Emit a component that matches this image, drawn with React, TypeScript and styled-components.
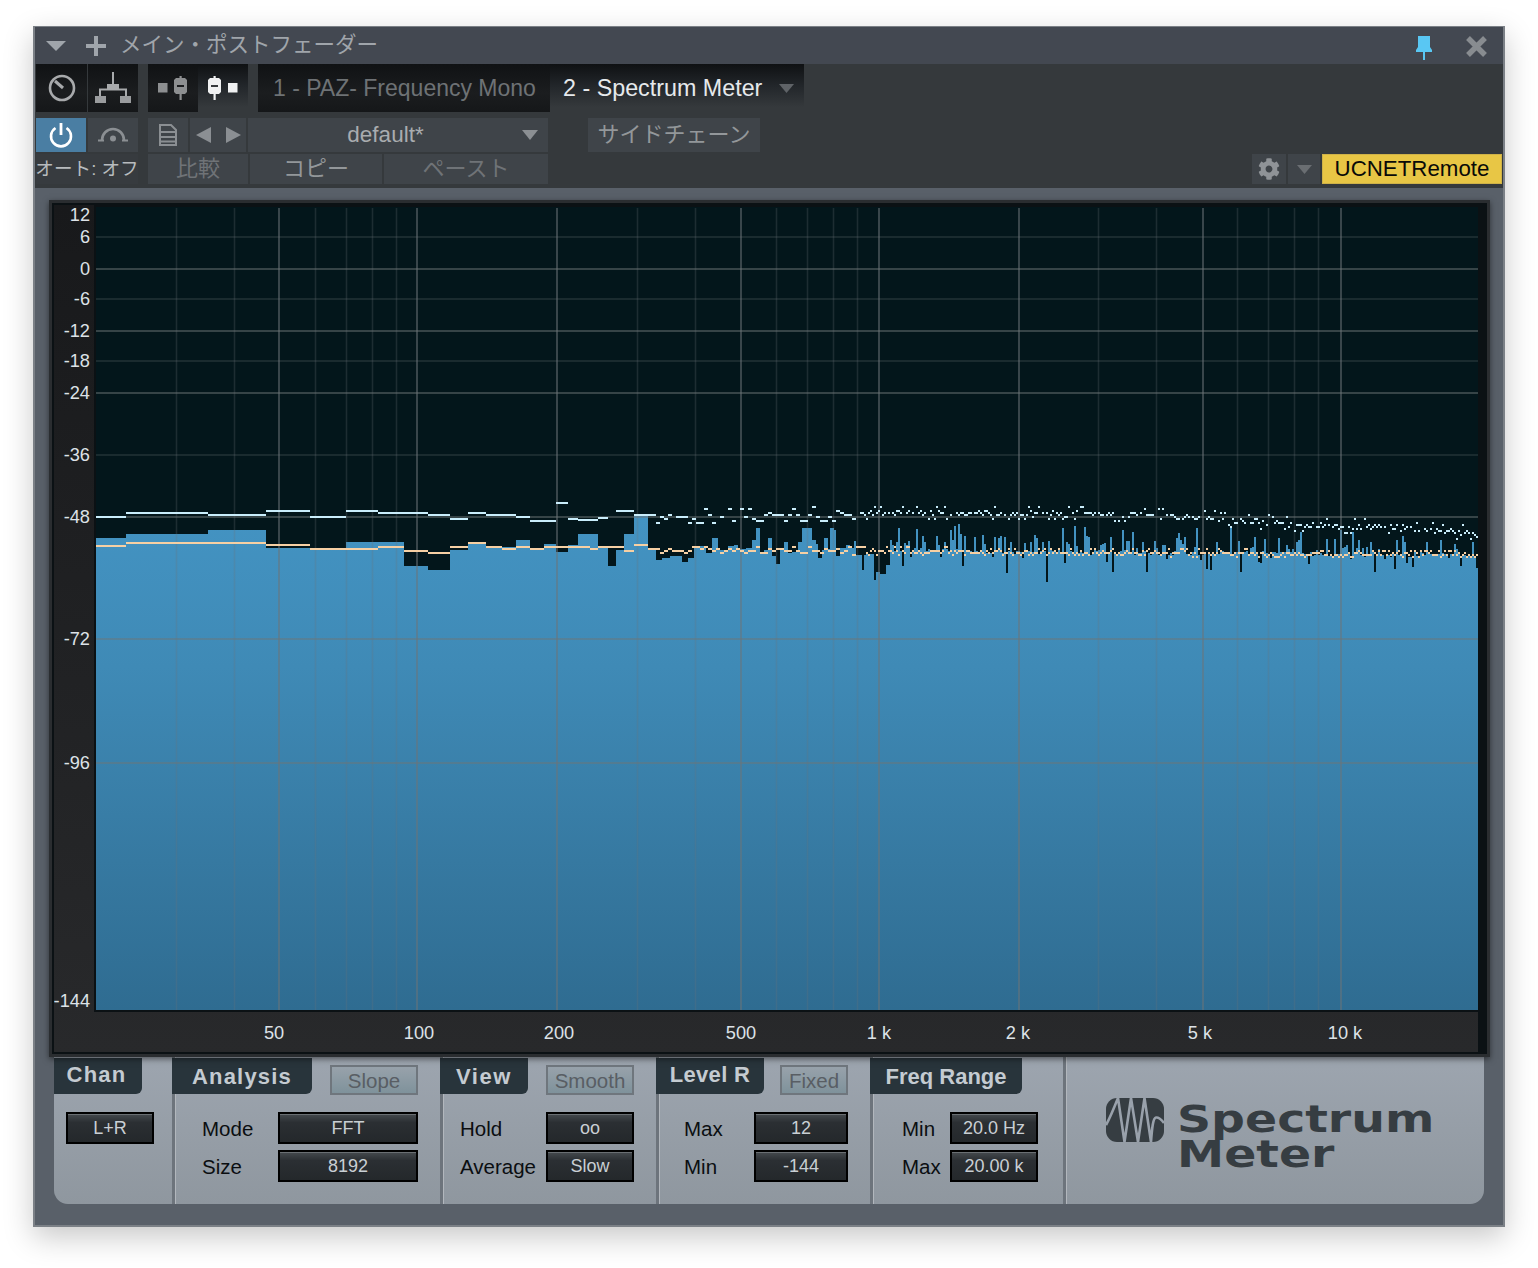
import React from 'react';
import styled, { createGlobalStyle } from 'styled-components';
import { FaCog } from 'react-icons/fa';

const FONT = '"Liberation Sans", "Noto Sans CJK JP", sans-serif';

const GlobalStyle = createGlobalStyle`
  html, body {
    margin: 0;
    background: #fff;
    font-family: ${FONT};
  }
`;

const Page = styled.div`
  width: 1538px;
  height: 1268px;
  padding: 26px 0 0 33px;
  box-sizing: border-box;
  overflow: hidden;
`;

const Window = styled.div`
  width: 1472px;
  height: 1201px;
  box-sizing: border-box;
  border: 2px solid #7b8086;
  border-width: 1px 2px 2px 2px;
  background: #596069;
  box-shadow: 0 10px 28px rgba(0, 0, 0, 0.22);
  display: flex;
  flex-direction: column;
`;

const TitleBar = styled.div`
  height: 37px;
  flex: none;
  background: #434851;
  display: flex;
  align-items: center;
  padding-left: 11px;
`;

const TitleText = styled.span`
  margin-left: 14px;
  padding-bottom: 6px;
  font-size: 21.5px;
  color: #a0a5ab;
  white-space: nowrap;
`;

const TitleActions = styled.div`
  margin-left: auto;
  margin-right: 16px;
  padding-top: 2px;
  display: flex;
  align-items: center;
  gap: 34px;
`;

const Toolbar = styled.div`
  height: 124px;
  flex: none;
  box-sizing: border-box;
  background: #35393c;
  padding: 0 1px;
  display: flex;
  flex-direction: column;
`;

const ToolRow = styled.div<{ $h: number; $top?: number }>`
  height: ${p => p.$h}px;
  margin-top: ${p => p.$top ?? 0}px;
  flex: none;
  display: flex;
  align-items: stretch;
`;

const Spacer = styled.div<{ $w: number }>`
  width: ${p => p.$w}px;
  flex: none;
`;

const Cell = styled.div<{ $w: number; $gap?: number; $jp?: boolean }>`
  width: ${p => p.$w}px;
  margin-right: ${p => p.$gap ?? 0}px;
  padding-bottom: ${p => (p.$jp ? 6 : 0)}px;
  box-sizing: border-box;
  flex: none;
  display: flex;
  align-items: center;
  justify-content: center;
  white-space: nowrap;
`;

const BlackCell = styled(Cell)`
  background: linear-gradient(#101214, #1b1d1f 60%, #151719);
`;

const OpenCell = styled(Cell)`
  background: linear-gradient(#0f1113, #22262a 45%, #35393c 90%);
`;

const TabInactive = styled(BlackCell)`
  justify-content: flex-start;
  padding-left: 15px;
  font-size: 23px;
  color: #6e7275;
`;

const TabActive = styled(OpenCell)`
  justify-content: flex-start;
  padding-left: 13px;
  font-size: 23.3px;
  color: #e6e9ec;
`;

const TabArrow = styled.div`
  margin-left: 17px;
  display: flex;
`;

const FlatButton = styled(Cell)<{ $dim?: boolean }>`
  background: #3f4449;
  font-size: 22px;
  color: ${p => (p.$dim ? '#6f7377' : '#93979a')};
`;

const PowerButton = styled(Cell)`
  background: #4a7ea3;
`;

const PresetBox = styled(FlatButton)`
  color: #a9acaf;
  padding-left: 25px;
  position: relative;
`;

const PresetName = styled.span`
  margin-right: 50px;
  font-size: 22.5px;
`;

const PresetArrow = styled.div`
  position: absolute;
  right: 10px;
  top: 12px;
  display: flex;
`;

const AutoLabel = styled(Cell)`
  font-size: 18.6px;
  color: #b8bbbe;
  background: #373b3f;
`;

const RightTools = styled.div`
  margin-left: auto;
  display: flex;
  gap: 2px;
`;

const RemoteButton = styled(Cell)`
  background: #e8c645;
  border: 1px solid #cfb248;
  color: #0a0a08;
  font-size: 22.3px;
`;

const GearIcon = styled(FaCog)`
  font-size: 22px;
  color: #8f9397;
`;

const Body = styled.div`
  flex: 1;
  padding: 12px 0 0 14px;
  display: flex;
  flex-direction: column;
  align-items: flex-start;
`;

const ScopeFrame = styled.div`
  width: 1441px;
  height: 857px;
  flex: none;
  box-sizing: border-box;
  border: 3px solid #2a2d30;
  background: #0b1114;
  padding: 2px;
  position: relative;
  z-index: 1;
  box-shadow: 0 2px 6px rgba(0, 0, 0, 0.5);
`;

const ScopeSvg = styled.svg`
  display: block;
`;

const AxisText = styled.text`
  font-family: ${FONT};
  font-size: 18.2px;
  fill: #dde2e7;
`;

const Panel = styled.div`
  width: 1430px;
  height: 147px;
  margin-left: 5px;
  flex: none;
  background: linear-gradient(#9da5af, #8f979f);
  border-radius: 0 0 14px 14px;
  display: flex;
`;

const Section = styled.div<{ $w: number; $first?: boolean }>`
  width: ${p => p.$w}px;
  flex: none;
  box-sizing: border-box;
  border-left: ${p => (p.$first ? 'none' : '3px solid #6d747c')};
  box-shadow: ${p => (p.$first ? 'none' : 'inset 1px 0 0 #b2b7bd')};
  display: flex;
  flex-direction: column;
`;

const Head = styled.div`
  height: 37px;
  padding-top: 1px;
  box-sizing: border-box;
  flex: none;
  display: flex;
  align-items: flex-start;
`;

const HeadTab = styled.div<{ $w: number; $first?: boolean; $raised?: boolean; $track?: number; $shift?: number }>`
  width: ${p => p.$w}px;
  height: 36px;
  margin-left: ${p => (p.$first ? 0 : -3)}px;
  box-sizing: border-box;
  padding-top: 2px;
  padding-bottom: ${p => (p.$raised ? 4 : 0)}px;
  padding-right: ${p => p.$shift ?? 0}px;
  background: #28343b;
  border-radius: 0 0 6px 0;
  display: flex;
  align-items: center;
  justify-content: center;
  font-size: 22px;
  font-weight: bold;
  letter-spacing: ${p => p.$track ?? 1}px;
  color: #c4cbd1;
  white-space: nowrap;
`;

const Toggle = styled.div<{ $w: number; $left: number }>`
  width: ${p => p.$w}px;
  height: 30px;
  margin: 7px 0 0 ${p => p.$left}px;
  padding-top: 2px;
  box-sizing: border-box;
  border: 2px solid #6f767d;
  background: linear-gradient(#98a2ab, #7f929b);
  display: flex;
  align-items: center;
  justify-content: center;
  font-size: 20.5px;
  color: #595e64;
`;

const Rows = styled.div<{ $pad: number }>`
  padding: 18px 0 0 ${p => p.$pad}px;
  display: flex;
  flex-direction: column;
  gap: 6px;
`;

const Row = styled.div`
  height: 32px;
  display: flex;
  align-items: center;
`;

const RowLabel = styled.div<{ $w: number }>`
  width: ${p => p.$w}px;
  flex: none;
  font-size: 20.5px;
  padding-top: 1px;
  color: #0b0e11;
  white-space: nowrap;
`;

const Selector = styled.div<{ $w: number }>`
  width: ${p => p.$w}px;
  height: 32px;
  flex: none;
  box-sizing: border-box;
  border: 2px solid #000;
  background: linear-gradient(#454a4e, #2b2f33 30%, #24282b);
  box-shadow: inset 0 1px 0 #6a6f73;
  display: flex;
  align-items: center;
  justify-content: center;
  font-size: 18px;
  color: #c9cfd4;
`;

const Brand = styled.div`
  flex: 1;
  box-sizing: border-box;
  padding: 41px 0 0 40px;
  display: flex;
  align-items: flex-start;
  gap: 13px;
`;

const Wordmark = styled.div`
  margin-top: 4px;
  font-family: "DejaVu Sans", sans-serif;
  font-weight: bold;
  font-size: 37px;
  line-height: 35px;
  color: #363d42;
  transform: scaleX(1.28);
  transform-origin: left top;
  white-space: nowrap;
`;

const PlusSvg = styled.svg`
  margin-left: 20px;
`;

const PinSvg = styled.svg`
  margin-top: 3px;
`;

const Triangle = ({ w, h, color }: { w: number; h: number; color: string }) => (
  <svg width={w} height={h} viewBox="0 0 20 10" preserveAspectRatio="none">
    <path d="M0 0h20L10 10z" fill={color} />
  </svg>
);

const Arrow = ({ dir }: { dir: 'left' | 'right' }) => (
  <svg width="15" height="16" viewBox="0 0 15 16">
    <path d={dir === 'left' ? 'M15 0v16L0 8z' : 'M0 0v16l15-8z'} fill="#8b8f93" />
  </svg>
);

const PlusIcon = () => (
  <PlusSvg width="20" height="20" viewBox="0 0 20 20">
    <path d="M8 0h4v8h8v4h-8v8H8v-8H0V8h8z" fill="#a0a5ab" />
  </PlusSvg>
);

const PinIcon = () => (
  <PinSvg width="16" height="24" viewBox="0 0 16 24">
    <path d="M2 0h12v11l2 3v2H0v-2l2-3z" fill="#59c7f3" />
    <rect x="7" y="16" width="2" height="8" fill="#59c7f3" />
  </PinSvg>
);

const CloseIcon = () => (
  <svg width="21" height="21" viewBox="0 0 21 21">
    <path d="M2 2l17 17M19 2L2 19" stroke="#888c90" strokeWidth="5.4" />
  </svg>
);

const KnobIcon = () => (
  <svg width="28" height="28" viewBox="0 0 28 28">
    <circle cx="14" cy="14" r="12" fill="none" stroke="#a8aaac" strokeWidth="2.6" />
    <path d="M7 7l8 7" stroke="#a8aaac" strokeWidth="3" />
  </svg>
);

const RoutingIcon = () => (
  <svg width="38" height="32" viewBox="0 0 38 32">
    <path d="M19 0v13M6 24v-6.500h26V24" fill="none" stroke="#a8aaac" strokeWidth="2" />
    <rect x="13" y="12" width="12" height="6" fill="#a8aaac" />
    <rect x="1" y="24" width="11" height="7" fill="#9a9c9e" />
    <rect x="26" y="24" width="11" height="7" fill="#9a9c9e" />
  </svg>
);

const FaderIcon = ({ color, flip }: { color: string; flip?: boolean }) => {
  const fx = flip ? 0 : 16;
  return (
    <svg width="30" height="24" viewBox="0 0 30 24">
      <rect x={flip ? 20 : 0} y="7" width="9.500" height="9.500" fill={color} />
      <rect x={fx + 5.5} y="0" width="2.200" height="24" fill={color} />
      <path d={`M${fx + 2} 2h9l2 2v12l-2 2h-9l-2-2V4z`} fill={color} />
      <rect x={fx + 3} y="9" width="7" height="2" fill={flip ? '#35393c' : '#1a1c1e'} />
    </svg>
  );
};

const PowerIcon = () => (
  <svg width="24" height="26" viewBox="0 0 24 26">
    <path d="M6.5 6a10 10 0 1 0 11 0" fill="none" stroke="#fff" strokeWidth="2.6" />
    <path d="M12 1v12" stroke="#fff" strokeWidth="2.8" />
  </svg>
);

const BypassIcon = () => (
  <svg width="30" height="16" viewBox="0 0 30 16">
    <path d="M4 13a11 11 0 0 1 22 0" fill="none" stroke="#8b8f93" strokeWidth="2.6" />
    <path d="M0 13.600h6M24 13.600h6" stroke="#8b8f93" strokeWidth="2" />
    <circle cx="15" cy="11.500" r="3" fill="#8b8f93" />
  </svg>
);

const DocIcon = () => (
  <svg width="18" height="22" viewBox="0 0 18 22">
    <path
      d="M1 1h11l5 5v15H1zM2 8h15M2 13h15M2 17.500h15"
      fill="none"
      stroke="#8b8f93"
      strokeWidth="2"
    />
  </svg>
);

const BrandIcon = () => (
  <svg width="58" height="44" viewBox="0 0 58 44">
    <rect width="58" height="44" rx="11" fill="#363d42" />
    <path
      d="M0 27C4 20 8 10 12 0L18.500 44 25 0 32 44 38.500 0 45 44C46 30 47 20 50 19.500 53 19 55 21 58 25"
      fill="none"
      stroke="#99a1ab"
      strokeWidth="2.6"
    />
  </svg>
);

// spectrum data, in page pixels
const PLOT_L = 96;
const PLOT_R = 1478;
const PLOT_T = 206;
const PLOT_B = 1010;

type Seg = [number, number, number];

const BARS: Seg[] = [
  [96, 126, 538], [126, 208, 534], [208, 266, 530], [266, 310, 548], [310, 346, 550],
  [346, 404, 542], [404, 428, 566], [428, 450, 570], [450, 468, 550], [468, 486, 544],
  [486, 516, 547], [516, 530, 540], [530, 544, 549], [544, 556, 544], [556, 568, 552],
  [568, 578, 545], [578, 598, 534], [598, 608, 547], [608, 616, 566], [616, 624, 550],
  [624, 634, 534], [634, 648, 516], [648, 656, 550],
];

const ORANGE: Seg[] = [
  [96, 126, 545], [126, 208, 542], [208, 266, 542], [266, 310, 544], [310, 346, 548],
  [346, 378, 548], [378, 404, 546], [404, 428, 550], [428, 450, 552], [450, 468, 546],
  [468, 486, 542], [486, 502, 546], [502, 516, 548], [516, 530, 546], [530, 544, 548],
  [544, 556, 546], [556, 590, 546], [590, 598, 548], [598, 624, 546], [624, 634, 550],
  [634, 648, 544], [648, 656, 548],
];

const WHITE: Seg[] = [
  [96, 126, 516], [126, 208, 512], [208, 266, 514], [266, 310, 510], [310, 346, 516],
  [346, 378, 510], [378, 428, 512], [428, 450, 514], [450, 468, 518], [468, 486, 512],
  [486, 516, 514], [516, 530, 516], [530, 556, 520], [556, 568, 502], [568, 578, 518],
  [578, 598, 519], [598, 608, 517], [616, 634, 510], [634, 648, 514], [648, 656, 514],
];

// measured steps between 656 and 890: [right edge, top]
const MID: [number, number][] = [
  [662, 560], [670, 558], [682, 556], [688, 562], [694, 558], [706, 546], [712, 553], [718, 538],
  [728, 550], [734, 546], [738, 545], [746, 549], [752, 548], [756, 540], [760, 528], [764, 553],
  [768, 550], [772, 538], [776, 556], [780, 564], [784, 548], [788, 542], [792, 553], [798, 552],
  [802, 542], [812, 528], [816, 540], [818, 544], [822, 558], [824, 550], [828, 538], [830, 549],
  [834, 528], [836, 530], [840, 556], [846, 548], [850, 545], [854, 548], [856, 541], [858, 555],
  [862, 555], [864, 570], [866, 555], [874, 554], [876, 580], [880, 572], [886, 574], [890, 565],
];

const SPIKES: Record<number, number> = {
  898: 528, 916: 529, 950: 530, 954: 526, 958: 524, 1007: 573, 1047: 582, 1063: 528,
  1075: 526, 1085: 527, 1112: 572, 1123: 530, 1146: 572, 1133: 532, 1178: 533, 1197: 528,
  1210: 570, 1241: 572, 1230: 528, 1300: 532, 1352: 532, 1340: 530, 1402: 536, 1440: 540,
};

const lerp = (pts: [number, number][], x: number) => {
  for (let i = 1; i < pts.length; i++) {
    if (x <= pts[i][0]) {
      const [x0, y0] = pts[i - 1];
      const [x1, y1] = pts[i];
      return y0 + ((y1 - y0) * (x - x0)) / (x1 - x0);
    }
  }
  return pts[pts.length - 1][1];
};

const WHITE_TREND: [number, number][] = [
  [656, 516], [800, 514], [870, 512], [1100, 513], [1200, 517], [1300, 524], [1400, 527], [1478, 533],
];

const buildSpectrum = () => {
  let seed = 4711;
  const rnd = () => {
    seed = (seed * 1664525 + 1013904223) >>> 0;
    return seed / 4294967296;
  };
  const bars = [...BARS];
  const orange = [...ORANGE];
  const white = [...WHITE];

  let from = 656;
  MID.forEach(([to, top]) => {
    bars.push([from, to, top]);
    from = to;
  });

  for (let x = 890; x < PLOT_R; x += 2) {
    const base = 550 + ((x - 890) / 588) * 6;
    const r = rnd();
    let top = base + (rnd() - 0.5) * 5;
    if (r < 0.24) top = base - 4 - rnd() * 13;
    else if (r < 0.36) top = base + 3 + rnd() * 14;
    bars.push([x, x + 2, Math.round(SPIKES[x] ?? SPIKES[x + 1] ?? top)]);
  }

  for (let x = 656; x < PLOT_R; x += x < 860 ? 4 : 2) {
    const w = x < 860 ? 4 : 2;
    const drift = 549 + ((x - 656) / 822) * 5;
    const o = rnd();
    const oy = drift + (o < 0.18 ? -4 : o < 0.36 ? 3 : (rnd() - 0.5) * 3);
    orange.push([x, x + w, Math.round(oy / 2) * 2]);

    const t = rnd();
    if (t > (x < 860 ? 0.06 : 0.16)) {
      const wy = lerp(WHITE_TREND, x) + (t > 0.9 ? -7 : t < 0.26 ? 6 : (rnd() - 0.5) * 5);
      white.push([x, x + w, Math.round(wy / 2) * 2]);
    }
  }

  const toPath = (segs: Seg[], h: number) =>
    segs.map(([a, b, y]) => `M${a} ${y}H${b}V${y + h}H${a}Z`).join('');

  return {
    bars: bars.map(([a, b, y]) => `M${a} ${y}H${b}V${PLOT_B}H${a}Z`).join(''),
    orange: toPath(orange, 2),
    white: toPath(white, 2),
  };
};

const SPECTRUM = buildSpectrum();

const freqX = (f: number) => Math.round(417 + 461 * Math.log10(f / 100)) + 0.5;

const MINOR_FREQS = [30, 40, 60, 70, 80, 90, 300, 400, 600, 700, 800, 900, 3000, 4000, 6000, 7000, 8000, 9000];
const MAJOR_X = [279, 417, 557, 741, 879, 1019, 1203, 1341];

const GRID = '#6d7478';

const DB_LINES: { y: number; label: string; major?: boolean }[] = [
  { y: 237, label: '6' },
  { y: 269, label: '0', major: true },
  { y: 299, label: '-6' },
  { y: 331, label: '-12', major: true },
  { y: 361, label: '-18' },
  { y: 393, label: '-24', major: true },
  { y: 455, label: '-36' },
  { y: 517, label: '-48', major: true },
  { y: 639, label: '-72', major: true },
  { y: 763, label: '-96', major: true },
];

const FREQ_LABELS: [number, string][] = [
  [274, '50'], [419, '100'], [559, '200'], [741, '500'], [879, '1 k'], [1018, '2 k'], [1200, '5 k'], [1345, '10 k'],
];

const Scope = () => (
  <ScopeSvg width="1431" height="847" viewBox="54 205 1431 847">
    <defs>
      <linearGradient id="bar" gradientUnits="userSpaceOnUse" x1="0" y1="520" x2="0" y2="1010">
        <stop offset="0" stopColor="#4393c2" />
        <stop offset="0.3" stopColor="#3f8ab6" />
        <stop offset="1" stopColor="#2f6c91" />
      </linearGradient>
      <linearGradient id="axis" x1="0" y1="0" x2="0" y2="1">
        <stop offset="0" stopColor="#18191b" />
        <stop offset="1" stopColor="#28292b" />
      </linearGradient>
    </defs>
    <rect x="54" y="205" width="1424" height="847" fill="url(#axis)" />
    <rect x={PLOT_L - 2} y="205" width={PLOT_R - PLOT_L + 2} height={PLOT_B - 205 + 2} fill="#0b1114" />
    <rect x={PLOT_L} y={PLOT_T + 1} width={PLOT_R - PLOT_L} height={PLOT_B - PLOT_T - 1} fill="#03161b" />

    <path d={SPECTRUM.bars} fill="url(#bar)" shapeRendering="crispEdges" />

    {MINOR_FREQS.map(f => (
      <line key={f} x1={freqX(f)} x2={freqX(f)} y1={208} y2={PLOT_B} stroke={GRID} strokeOpacity="0.25" strokeWidth="1.6" />
    ))}
    {MAJOR_X.map(x => (
      <line key={x} x1={x} x2={x} y1={208} y2={PLOT_B} stroke={GRID} strokeOpacity="0.65" strokeWidth="1.6" />
    ))}
    {DB_LINES.map(l => (
      <line
        key={l.y}
        x1={PLOT_L}
        x2={PLOT_R}
        y1={l.y}
        y2={l.y}
        stroke={GRID}
        strokeOpacity={l.major ? 0.65 : 0.3}
        strokeWidth="1.6"
      />
    ))}

    <path d={SPECTRUM.white} fill="#c9edfb" shapeRendering="crispEdges" />
    <path d={SPECTRUM.orange} fill="#f6d0a4" shapeRendering="crispEdges" />

    <AxisText x="90" y="221" textAnchor="end">12</AxisText>
    {DB_LINES.map(l => (
      <AxisText key={l.label} x="90" y={l.y + 6} textAnchor="end">{l.label}</AxisText>
    ))}
    <AxisText x="90" y="1007" textAnchor="end">-144</AxisText>
    {FREQ_LABELS.map(([x, label]) => (
      <AxisText key={label} x={x} y="1039" textAnchor="middle">{label}</AxisText>
    ))}
  </ScopeSvg>
);

export default function App() {
  return (
    <Page>
      <GlobalStyle />
      <Window>
        <TitleBar>
          <Triangle w={20} h={10} color="#a0a5ab" />
          <PlusIcon />
          <TitleText>メイン・ポストフェーダー</TitleText>
          <TitleActions>
            <PinIcon />
            <CloseIcon />
          </TitleActions>
        </TitleBar>

        <Toolbar>
          <ToolRow $h={48}>
            <BlackCell $w={51} $gap={1}><KnobIcon /></BlackCell>
            <BlackCell $w={50}><RoutingIcon /></BlackCell>
            <Spacer $w={10} />
            <BlackCell $w={50}><FaderIcon color="#8d8f91" /></BlackCell>
            <OpenCell $w={50}><FaderIcon color="#f0f1f2" flip /></OpenCell>
            <Spacer $w={10} />
            <TabInactive $w={292}>1 - PAZ- Frequency Mono</TabInactive>
            <TabActive $w={254}>
              2 - Spectrum Meter
              <TabArrow><Triangle w={15} h={9} color="#5f6367" /></TabArrow>
            </TabActive>
          </ToolRow>

          <ToolRow $h={34} $top={6}>
            <PowerButton $w={50} $gap={2}><PowerIcon /></PowerButton>
            <FlatButton $w={50}><BypassIcon /></FlatButton>
            <Spacer $w={10} />
            <FlatButton $w={40} $gap={2}><DocIcon /></FlatButton>
            <FlatButton $w={56} $gap={2}>
              <Arrow dir="left" />
              <Spacer $w={15} />
              <Arrow dir="right" />
            </FlatButton>
            <PresetBox $w={300}>
              <PresetName>default*</PresetName>
              <PresetArrow><Triangle w={16} h={10} color="#8b8f93" /></PresetArrow>
            </PresetBox>
            <Spacer $w={40} />
            <FlatButton $w={172} $jp>サイドチェーン</FlatButton>
          </ToolRow>

          <ToolRow $h={30} $top={2}>
            <AutoLabel $w={102} $jp>オート: オフ</AutoLabel>
            <Spacer $w={10} />
            <FlatButton $w={100} $gap={2} $dim $jp>比較</FlatButton>
            <FlatButton $w={132} $gap={2} $jp>コピー</FlatButton>
            <FlatButton $w={164} $dim $jp>ペースト</FlatButton>
            <RightTools>
              <FlatButton $w={34}><GearIcon /></FlatButton>
              <FlatButton $w={32}><Triangle w={15} h={9} color="#6a6e72" /></FlatButton>
              <RemoteButton $w={180}>UCNETRemote</RemoteButton>
            </RightTools>
          </ToolRow>
        </Toolbar>

        <Body>
          <ScopeFrame>
            <Scope />
          </ScopeFrame>
          <Panel>
            <Section $w={118} $first>
              <Head><HeadTab $w={88} $first $raised $track={1.2} $shift={3}>Chan</HeadTab></Head>
              <Rows $pad={12}>
                <Row><Selector $w={88}>L+R</Selector></Row>
              </Rows>
            </Section>

            <Section $w={268}>
              <Head>
                <HeadTab $w={140} $track={1.2}>Analysis</HeadTab>
                <Toggle $w={88} $left={18}>Slope</Toggle>
              </Head>
              <Rows $pad={27}>
                <Row><RowLabel $w={76}>Mode</RowLabel><Selector $w={140}>FFT</Selector></Row>
                <Row><RowLabel $w={76}>Size</RowLabel><Selector $w={140}>8192</Selector></Row>
              </Rows>
            </Section>

            <Section $w={216}>
              <Head>
                <HeadTab $w={88} $track={1.6}>View</HeadTab>
                <Toggle $w={88} $left={18}>Smooth</Toggle>
              </Head>
              <Rows $pad={17}>
                <Row><RowLabel $w={86}>Hold</RowLabel><Selector $w={88}>oo</Selector></Row>
                <Row><RowLabel $w={86}>Average</RowLabel><Selector $w={88}>Slow</Selector></Row>
              </Rows>
            </Section>

            <Section $w={214}>
              <Head>
                <HeadTab $w={108} $raised $track={0.3}>Level R</HeadTab>
                <Toggle $w={68} $left={16}>Fixed</Toggle>
              </Head>
              <Rows $pad={25}>
                <Row><RowLabel $w={70}>Max</RowLabel><Selector $w={94}>12</Selector></Row>
                <Row><RowLabel $w={70}>Min</RowLabel><Selector $w={94}>-144</Selector></Row>
              </Rows>
            </Section>

            <Section $w={193}>
              <Head><HeadTab $w={152} $track={0}>Freq Range</HeadTab></Head>
              <Rows $pad={29}>
                <Row><RowLabel $w={48}>Min</RowLabel><Selector $w={88}>20.0 Hz</Selector></Row>
                <Row><RowLabel $w={48}>Max</RowLabel><Selector $w={88}>20.00 k</Selector></Row>
              </Rows>
            </Section>

            <Section $w={421}>
              <Brand>
                <BrandIcon />
                <Wordmark>Spectrum<br />Meter</Wordmark>
              </Brand>
            </Section>
          </Panel>
        </Body>
      </Window>
    </Page>
  );
}
